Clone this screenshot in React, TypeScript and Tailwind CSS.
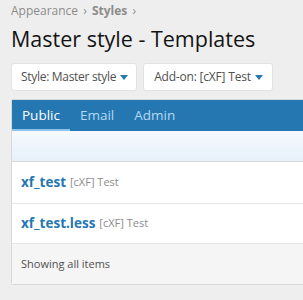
import React from "react";

function Caret() {
  return (
    <svg width="8" height="5" viewBox="0 0 8 5" className="ml-[4px] inline-block">
      <path d="M0 0 L8 0 L4 5 Z" fill="#2577b1" />
    </svg>
  );
}

export default function App() {
  return (
    <div
      className="w-[303px] h-[300px] overflow-hidden bg-[#eeeeee] text-[#141414]"
      style={{ fontFamily: '"Open Sans", "Noto Sans", sans-serif' }}
    >
      <div className="pl-[11px] pt-[3px] text-[12px] leading-[16px] text-[#8c8c8c]">
        Appearance <span className="mx-[2px]">›</span> <span className="font-bold">Styles</span>{" "}
        <span className="mx-[2px]">›</span>
      </div>
      <h1 className="pl-[11px] mt-[6px] text-[21.5px] leading-[28px] font-normal text-[#141414]">
        Master style - Templates
      </h1>
      <div className="flex gap-[6px] pl-[11px] mt-[10px]">
        <div className="h-[28px] pl-[9px] pr-[8px] flex items-center bg-white border border-[#e2e2e2] rounded-[3px] text-[12px] tracking-[-0.3px] text-[#505050]">
          Style: Master style
          <Caret />
        </div>
        <div className="h-[28px] pl-[10px] pr-[9px] flex items-center bg-white border border-[#e2e2e2] rounded-[3px] text-[12px] tracking-[-0.2px] text-[#505050]">
          Add-on: [cXF] Test
          <Caret />
        </div>
      </div>
      <div className="ml-[11px] mt-[8px] border border-[#d8d8d8] border-r-0 rounded-tl-[3px] rounded-bl-[3px] bg-white">
        <div className="h-[31px] bg-[#2577b1] flex text-[13.5px]">
          <div className="h-full flex items-center px-[10px] text-white border-b-[2px] border-[#8cc4ee] pt-[2px]">
            Public
          </div>
          <div className="h-full flex items-center px-[10px] text-[#b6d8f3]">Email</div>
          <div className="h-full flex items-center px-[10px] text-[#b6d8f3]">Admin</div>
        </div>
        <div className="h-[31px] bg-gradient-to-b from-[#f5f9fd] to-[#e7f1fa] border-b border-[#d8d8d8]" />
        <div className="h-[42px] flex items-center pl-[9px] border-b border-[#e5e5e5]">
          <span className="text-[13.5px] font-bold text-[#2577b1]">xf_test</span>
          <span className="ml-[4px] text-[11px] text-[#8c8c8c]">[cXF] Test</span>
        </div>
        <div className="h-[40px] flex items-center pl-[9px] border-b border-[#e5e5e5]">
          <span className="text-[13.5px] font-bold text-[#2577b1]">xf_test.less</span>
          <span className="ml-[4px] text-[11px] text-[#8c8c8c]">[cXF] Test</span>
        </div>
        <div className="h-[40px] flex items-center pl-[9px] bg-[#f5f5f5] text-[11px] text-[#505050]">
          Showing all items
        </div>
      </div>
    </div>
  );
}
